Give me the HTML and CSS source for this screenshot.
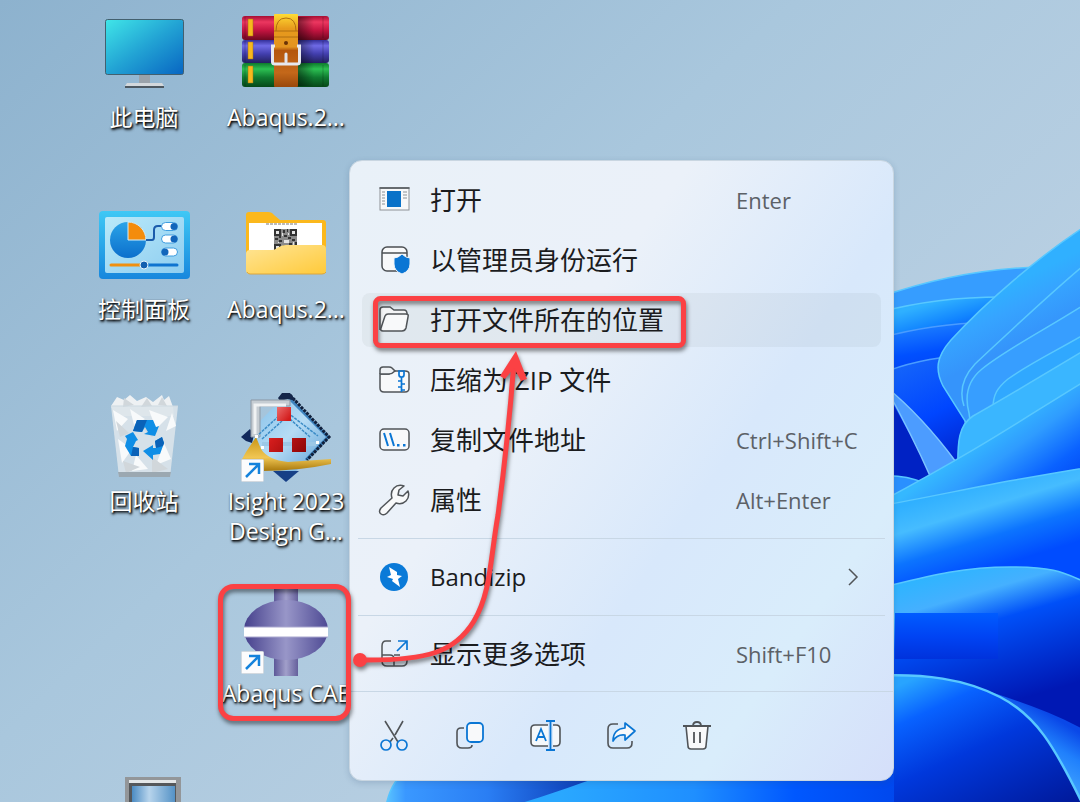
FILE: index.html
```html
<!DOCTYPE html>
<html lang="zh-CN">
<head>
  <meta charset="UTF-8">
  <title>桌面</title>
  <link rel="stylesheet" href="styles.css">
</head>
<body>

<!-- wallpaper -->
<svg class="wallpaper" viewBox="0 0 1080 802" preserveAspectRatio="xMinYMin slice" aria-hidden="true">
  <defs>
    <linearGradient id="sky" x1="0" y1="0" x2="1" y2="0.8">
      <stop offset="0" stop-color="#8db2ce"/>
      <stop offset="0.45" stop-color="#a9c7dd"/>
      <stop offset="1" stop-color="#c3d5e6"/>
    </linearGradient>
    <linearGradient id="p0" gradientUnits="userSpaceOnUse" x1="950" y1="298" x2="962" y2="340">
      <stop offset="0" stop-color="#2fb0ff"/>
      <stop offset="0.5" stop-color="#1184ff"/>
      <stop offset="1" stop-color="#004af8"/>
    </linearGradient>
    <linearGradient id="p1" gradientUnits="userSpaceOnUse" x1="930" y1="325" x2="940" y2="390">
      <stop offset="0" stop-color="#1a7cff"/>
      <stop offset="0.4" stop-color="#0050ff"/>
      <stop offset="1" stop-color="#0036ee"/>
    </linearGradient>
    <linearGradient id="p1b" gradientUnits="userSpaceOnUse" x1="900" y1="365" x2="950" y2="470">
      <stop offset="0" stop-color="#1464fa"/>
      <stop offset="0.5" stop-color="#0046ff"/>
      <stop offset="1" stop-color="#0020c8"/>
    </linearGradient>
    <linearGradient id="p2" gradientUnits="userSpaceOnUse" x1="1000" y1="290" x2="1025" y2="340">
      <stop offset="0" stop-color="#30b0ff"/>
      <stop offset="0.4" stop-color="#36a4ff"/>
      <stop offset="1" stop-color="#3594fb"/>
    </linearGradient>
    <linearGradient id="p3" gradientUnits="userSpaceOnUse" x1="965" y1="450" x2="1020" y2="525">
      <stop offset="0" stop-color="#35b8ff"/>
      <stop offset="0.3" stop-color="#2f9cff"/>
      <stop offset="0.7" stop-color="#0a62ff"/>
      <stop offset="1" stop-color="#0048f5"/>
    </linearGradient>
    <linearGradient id="p4" gradientUnits="userSpaceOnUse" x1="960" y1="488" x2="985" y2="570">
      <stop offset="0" stop-color="#30b0ff"/>
      <stop offset="0.3" stop-color="#46bcff"/>
      <stop offset="0.65" stop-color="#0c74ff"/>
      <stop offset="1" stop-color="#004cff"/>
    </linearGradient>
    <linearGradient id="p5" gradientUnits="userSpaceOnUse" x1="960" y1="568" x2="1000" y2="705">
      <stop offset="0" stop-color="#2fb4ff"/>
      <stop offset="0.2" stop-color="#45b0ff"/>
      <stop offset="0.42" stop-color="#0050f8"/>
      <stop offset="1" stop-color="#0018b4"/>
    </linearGradient>
    <linearGradient id="p6" gradientUnits="userSpaceOnUse" x1="915" y1="678" x2="990" y2="840">
      <stop offset="0" stop-color="#28a4ff"/>
      <stop offset="0.2" stop-color="#0862ff"/>
      <stop offset="0.5" stop-color="#0038dc"/>
      <stop offset="1" stop-color="#001a9c"/>
    </linearGradient>
    <linearGradient id="p7" gradientUnits="userSpaceOnUse" x1="385" y1="0" x2="590" y2="0">
      <stop offset="0" stop-color="#5cc6ff"/>
      <stop offset="0.1" stop-color="#3a98ff"/>
      <stop offset="0.5" stop-color="#2a7ef4"/>
      <stop offset="1" stop-color="#0a3ab4"/>
    </linearGradient>
    <linearGradient id="p8" gradientUnits="userSpaceOnUse" x1="560" y1="0" x2="895" y2="0">
      <stop offset="0" stop-color="#2aa8ff"/>
      <stop offset="0.4" stop-color="#1f8fff"/>
      <stop offset="0.7" stop-color="#0058ff"/>
      <stop offset="1" stop-color="#0048ee"/>
    </linearGradient>
    <linearGradient id="block" x1="0" y1="0" x2="0" y2="1">
      <stop offset="0" stop-color="#005cff"/>
      <stop offset="0.5" stop-color="#0044f4"/>
      <stop offset="1" stop-color="#0032dc"/>
    </linearGradient>
    <linearGradient id="blade" gradientUnits="userSpaceOnUse" x1="1036" y1="765" x2="1062" y2="722">
      <stop offset="0" stop-color="#3a9cff"/>
      <stop offset="0.5" stop-color="#2080fc"/>
      <stop offset="1" stop-color="#0a48e8"/>
    </linearGradient>
  </defs>
  <rect width="1080" height="802" fill="url(#sky)"/>
  <g stroke="#58c8ff" stroke-width="1.500">
    <path d="M880 297Q960 269 1040 267V480H880z" fill="#369dff"/>
    <path d="M880 312Q940 296 1010 297V480H880z" fill="url(#p0)"/>
    <path d="M880 338Q930 324 990 322V480H880z" fill="url(#p1)" stroke="#4a9cff"/>
    <path d="M880 374Q915 359 965 355V480H880z" fill="url(#p1b)" stroke="#4a9cff"/>
    <path d="M880 380L940 490H880z" fill="#0022c4" stroke="none"/>
    <path d="M885 386Q922 416 956 462L931 478Q912 435 885 386z" fill="#4c9cff" stroke="#7cc4ff"/>
    <path d="M880 476Q903 474 925 483L880 510z" fill="#2a90ff"/>
    <path d="M1090 223C1040 255 985 303 951 340C936 357 935 370 943 386L972 432L1090 420z" fill="url(#p2)"/>
    <path d="M1090 260C1050 293 1004 337 975 364C962 378 959 391 964 406" fill="none"/>
    <path d="M1090 301C1050 327 1008 348 982 369C966 382 965 398 969 413L972 435L1090 400z" fill="#379eff"/>
    <path d="M1090 331C1060 349 1030 363 1008 379C997 388 993 395 993 408L1090 400z" fill="#30a8ff"/>
    <path d="M1090 347C1050 371 1005 398 973 416C959 425 957 440 958 475L1090 430z" fill="#3ab6ff"/>
    <path d="M1090 378C1030 414 985 446 880 502V570H1090z" fill="url(#p3)"/>
    <path d="M880 506C930 497 980 486 1015 480S1060 472 1090 467V640H880z" fill="url(#p4)"/>
    <path d="M880 588C925 577 960 567 1010 567S1065 574 1090 584V812H880z" fill="url(#p5)"/>
    <path d="M895 613H998V659H895z" fill="url(#block)" stroke="none"/>
    <path d="M985 690C1020 702 1055 713 1090 733V812H1050z" fill="url(#blade)" stroke="none"/>
    <path d="M870 676C925 673 965 679 1000 697S1053 742 1088 815H870z" fill="url(#p6)" stroke="none"/>
    <path d="M870 676C925 673 965 679 1000 697S1053 742 1088 815" fill="none" stroke-width="2.500"/>
    <path d="M385 812C388 790 397 770 425 760H620V812z" fill="url(#p7)" stroke="#55c4ff"/>
    <path d="M500 809C550 796 590 778 640 765H894V812H500z" fill="url(#p8)" stroke="none"/>
  </g>
</svg>

<main class="desktop">
  <svg class="defs" aria-hidden="true">
    <symbol id="shortcut" viewBox="0 0 23 23">
      <rect x="0.5" y="0.5" width="22" height="22" rx="1" fill="#fcfcfd" stroke="#d3d9df"/>
      <path d="M5 18L18 5M8 5H18V15" fill="none" stroke="#1583dc" stroke-width="2.500"/>
    </symbol>
  </svg>

  <a class="icon" href="#">
    <svg viewBox="0 0 96 88" aria-hidden="true">
      <defs>
        <linearGradient id="screen" x1="0" y1="0" x2="1" y2="1">
          <stop offset="0" stop-color="#40e6e8"/>
          <stop offset="0.5" stop-color="#22a3d4"/>
          <stop offset="1" stop-color="#0865c2"/>
        </linearGradient>
      </defs>
      <path d="M43 68H54V77H43z" fill="#9aa2aa"/>
      <path d="M31 76H66L68 79H29z" fill="#d3d8dc"/>
      <path d="M29 79H68V81H29z" fill="#4d5861"/>
      <rect x="9.500" y="12.500" width="78" height="55" rx="2" fill="url(#screen)" stroke="#43606f"/>
    </svg>
    <span>此电脑</span>
  </a>

  <a class="icon" href="#">
    <svg viewBox="0 0 96 88" aria-hidden="true">
      <defs>
        <linearGradient id="red" x1="0" y1="0" x2="0" y2="1"><stop offset="0" stop-color="#a80f34"/><stop offset="0.25" stop-color="#ec3760"/><stop offset="0.6" stop-color="#c21440"/><stop offset="1" stop-color="#6d0820"/></linearGradient>
        <linearGradient id="blue" x1="0" y1="0" x2="0" y2="1"><stop offset="0" stop-color="#33309a"/><stop offset="0.25" stop-color="#6f6ae6"/><stop offset="0.6" stop-color="#423fae"/><stop offset="1" stop-color="#23205e"/></linearGradient>
        <linearGradient id="green" x1="0" y1="0" x2="0" y2="1"><stop offset="0" stop-color="#0d7a2c"/><stop offset="0.25" stop-color="#2cc052"/><stop offset="0.6" stop-color="#107a30"/><stop offset="1" stop-color="#064818"/></linearGradient>
        <linearGradient id="strap" x1="0" y1="0" x2="0" y2="1"><stop offset="0" stop-color="#ffdc34"/><stop offset="0.2" stop-color="#e79a1c"/><stop offset="0.45" stop-color="#e39420"/><stop offset="0.5" stop-color="#b4560c"/><stop offset="0.8" stop-color="#c4681a"/><stop offset="1" stop-color="#99480c"/></linearGradient>
        <linearGradient id="shade" x1="0" y1="0" x2="1" y2="0"><stop offset="0" stop-color="#000" stop-opacity="0.45"/><stop offset="1" stop-color="#000" stop-opacity="0"/></linearGradient>
      </defs>
      <rect x="4" y="9" width="87" height="24" rx="3" fill="url(#red)"/>
      <rect x="4" y="33" width="87" height="23" rx="3" fill="url(#blue)"/>
      <rect x="4" y="56" width="87" height="24" rx="3" fill="url(#green)"/>
      <path d="M7 10V31M7 34V55M7 58V79M85 10V31M85 34V55M85 58V79" stroke="#000" stroke-opacity="0.2"/>
      <path d="M10 12H15V29H10zM10 35H15V52H10zM10 59H15V76H10z" fill="#f6b81e" stroke="#9c7016" stroke-width="0.500"/>
      <path d="M60 10H76V79H60z" fill="url(#shade)"/>
      <rect x="36" y="7" width="24" height="73" rx="1" fill="url(#strap)"/>
      <path d="M38 24Q38 11 48 11T58 24M36 24H60M36 30H60" fill="none" stroke="#b06f10"/>
      <circle cx="48" cy="36" r="2" fill="#6a3206"/>
      <path d="M37 39H34.500V55Q34.500 57 37 57H59Q61.500 57 61.500 55V39H59" fill="none" stroke="#e6e8ee" stroke-width="3"/>
      <path d="M48 47V55" stroke="#e2e4ea" stroke-width="3" stroke-linecap="round"/>
    </svg>
    <span>Abaqus.2...</span>
  </a>

  <a class="icon" href="#">
    <svg viewBox="0 0 96 88" aria-hidden="true">
      <defs>
        <linearGradient id="panel" x1="0" y1="0" x2="0" y2="1"><stop offset="0" stop-color="#3fc8f5"/><stop offset="1" stop-color="#1787dd"/></linearGradient>
        <linearGradient id="inner" x1="0" y1="0" x2="1" y2="1"><stop offset="0" stop-color="#b9e9f9"/><stop offset="1" stop-color="#8ecdf0"/></linearGradient>
        <linearGradient id="pie" x1="0" y1="0" x2="0" y2="1"><stop offset="0" stop-color="#2aa4e8"/><stop offset="1" stop-color="#0c6fcc"/></linearGradient>
      </defs>
      <rect x="3" y="12" width="91" height="68" rx="4" fill="url(#panel)"/>
      <rect x="9" y="18" width="79" height="56" rx="2" fill="url(#inner)"/>
      <circle cx="32" cy="41" r="18" fill="url(#pie)"/>
      <path d="M32 41V23A18 18 0 0 1 50 41z" fill="#f48c0c" stroke="#d3eefa"/>
      <path d="M50 41H56Q58 41 58 38V31Q58 27 62 27H66" fill="none" stroke="#1a5cac" stroke-width="2"/>
      <g fill="#fff" stroke="#3f9ee0">
        <rect x="65.500" y="23.500" width="16" height="8" rx="4"/>
        <rect x="65.500" y="36" width="16" height="8" rx="4"/>
        <rect x="65.500" y="49" width="16" height="8" rx="4"/>
      </g>
      <g fill="#1266bb"><circle cx="78" cy="27.500" r="3.500"/><circle cx="78" cy="40" r="3.500"/><circle cx="69" cy="53" r="3.500"/></g>
      <path d="M15 66H46" stroke="#f0900f" stroke-width="3" stroke-linecap="round"/>
      <path d="M50 66H81" stroke="#0f74d0" stroke-width="3" stroke-linecap="round"/>
      <circle cx="48" cy="66" r="4" fill="#1460b0" stroke="#e6f5fc"/>
    </svg>
    <span>控制面板</span>
  </a>

  <a class="icon" href="#">
    <svg viewBox="0 0 96 88" aria-hidden="true">
      <defs>
        <linearGradient id="front" x1="0" y1="0" x2="1" y2="1"><stop offset="0" stop-color="#ffe596"/><stop offset="1" stop-color="#ffca3a"/></linearGradient>
      </defs>
      <path d="M8 16Q8 13 11 13H30Q34 13 36 16L42 21H85Q88 21 88 24V60H8z" fill="#fbb81c"/>
      <path d="M11 24H84V60H11z" fill="#fff"/>
      <path d="M28 25H59" stroke="#777" stroke-dasharray="3 1"/>
      <rect x="36" y="30" width="23" height="22" fill="#8b8b8b"/>
      <path d="M36 30H43V37H36zM52 30H59V37H52zM36 45H43V52H36zM45 31H47V34H45zM49 30H50V33H49zM46 36H49V38H46zM50 38H53V40H50zM37 39H40V41H37zM41 41H44V43H41zM54 40H57V42H54zM57 43H59V46H57zM51 44H54V46H51zM45 46H48V49H45zM49 48H52V51H49zM54 48H57V50H54zM41 37H43V39H41z" fill="#333"/>
      <path d="M38 32H41V35H38zM54 32H57V35H54zM38 47H41V50H38zM44 34H45V37H44zM50 34H51V36H50zM40 43H41V44H40zM55 43H56V46H55zM53 50H54V52H53zM46 41H51V44H46z" fill="#e4e4e4"/>
      <path d="M8 55Q8 51 12 51H34Q37 51 39 49L43 47Q45 46 48 46H84Q88 46 88 50V71Q88 75 84 75H12Q8 75 8 71z" fill="url(#front)"/>
      <path d="M9 73Q10 75 12 75H84Q87 75 88 73" fill="none" stroke="#dca63c"/>
    </svg>
    <span>Abaqus.2...</span>
  </a>

  <a class="icon" href="#">
    <svg viewBox="0 0 96 88" aria-hidden="true">
      <path d="M15 15L21 6L28 9L34 4L41 10L50 6L57 11L66 4L68 9L73 5L77 16L78 25H19z" fill="#eef1f3"/>
      <path d="M15 15H82L74 86H23z" fill="#dce4ea" opacity="0.900"/>
      <path d="M17 19L32 28L21 40zM34 18L49 28L38 34zM53 19L72 26L60 38zM76 22L80 35L70 40zM22 48L36 58L26 72zM40 64L52 78L36 80zM68 52L75 68L60 74z" fill="#f8fafb"/>
      <path d="M20 30L33 42L24 46zM44 34L62 40L56 46zM27 70L44 76L30 82zM56 66L72 78L56 82zM28 7L38 14L27 16zM51 7L56 15L45 16zM66 6L71 15L62 14z" fill="#d1d7db"/>
      <path d="M22 81H75L74 86H23z" fill="#9ba8b1"/>
      <path d="M15 15H82" stroke="#cdd9e1"/>
      <path d="M37 40L41 29H57L60 36L63 35L59 45L48 43L52 41L49 36L46 41z" fill="#0f8ee6"/>
      <path d="M37 40L41 29H51L46 41z" fill="#0a62b8"/>
      <path d="M29 45L37 41L42 49L40 50L37 56L43 57V65H35L29 55L31 48z" fill="#0f8ee6"/>
      <path d="M37 56L43 57V65H35z" fill="#0a62b8"/>
      <path d="M59 50L66 46L68 52L64 63L57 64V69L47 60L57 54V57H60z" fill="#0f8ee6"/>
      <path d="M59 50L66 46L68 52L67 55L60 57z" fill="#0a62b8"/>
    </svg>
    <span>回收站</span>
  </a>

  <a class="icon" href="#">
    <svg viewBox="0 0 96 88" aria-hidden="true">
      <defs>
        <linearGradient id="ice" x1="0" y1="0" x2="1" y2="1"><stop offset="0" stop-color="#79b9e6"/><stop offset="0.5" stop-color="#b6dcf5"/><stop offset="1" stop-color="#4a92cd"/></linearGradient>
        <linearGradient id="gold" x1="0" y1="0" x2="0" y2="1"><stop offset="0" stop-color="#c89414"/><stop offset="0.6" stop-color="#f0c653"/><stop offset="1" stop-color="#a8780c"/></linearGradient>
        <linearGradient id="cube" x1="0" y1="0" x2="1" y2="1"><stop offset="0" stop-color="#f48a8a"/><stop offset="0.4" stop-color="#d31c1c"/><stop offset="1" stop-color="#8c0606"/></linearGradient>
      </defs>
      <path d="M48 3L92 46L48 90L6 47z" fill="url(#ice)"/>
      <path d="M50 6L90 46L68 69" fill="none" stroke="#3f84bf" stroke-width="3"/>
      <path d="M52 4L91 46L69 69" fill="none" stroke="#10203c" stroke-width="3" stroke-dasharray="3 1"/>
      <path d="M40 7L44 2H52L58 10L50 8L42 10z" fill="#14264a"/>
      <path d="M3 46L12 38L16 44L14 52L8 50z" fill="#12295c"/>
      <path d="M35 80H61L48 91z" fill="#163f86"/>
      <path d="M13 9H52V15H22V46H13z" fill="#c6cdd3" stroke="#8b97a3"/>
      <path d="M17 43V14H48" fill="none" stroke="#f0f2f3" stroke-width="3"/>
      <path d="M18 46L44 22M24 48L44 30M50 22L80 45M52 28L72 46" fill="none" stroke="#3c8cc6" stroke-width="1.500" stroke-dasharray="3 1"/>
      <path d="M24 53H78" stroke="#9cc8e6" stroke-width="4"/>
      <path d="M3 70L8 61L18 46L23 58Q30 69 50 71L93 68V73Q60 80 24 80H3z" fill="url(#gold)"/>
      <path d="M39 16H53V30H39zM31 47H45V61H31zM54 47H68V61H54z" fill="url(#cube)"/>
      <path d="M17 44H20V47H17zM23 55H26V58H23zM78 50H81V53H78z" fill="#fff"/>
      <use href="#shortcut" x="3" y="68" width="23" height="23"/>
    </svg>
    <span>Isight 2023 Design G...</span>
  </a>

  <a class="icon second-column" href="#">
    <svg viewBox="0 0 96 88" aria-hidden="true">
      <defs>
        <linearGradient id="metal" x1="0" y1="0" x2="1" y2="0"><stop offset="0" stop-color="#45408c"/><stop offset="0.5" stop-color="#9896c8"/><stop offset="1" stop-color="#4e4a94"/></linearGradient>
        <linearGradient id="pipe" x1="0" y1="0" x2="1" y2="0"><stop offset="0" stop-color="#5d5898"/><stop offset="0.5" stop-color="#a19fca"/><stop offset="1" stop-color="#65609c"/></linearGradient>
      </defs>
      <path d="M36 6H60V93H36z" fill="url(#pipe)"/>
      <ellipse cx="48" cy="47" rx="42" ry="30" fill="url(#metal)"/>
      <path d="M6 44H90V54H6z" fill="#fff"/>
      <path d="M6 44H90M6 54H90" stroke="#a9a7cf"/>
      <use href="#shortcut" x="3" y="68" width="23" height="23"/>
    </svg>
    <span>Abaqus CAE</span>
  </a>

  <a class="icon first-column" href="#" aria-label="其他程序">
    <svg viewBox="0 0 96 88" aria-hidden="true">
      <defs>
        <linearGradient id="glass" x1="0" y1="0" x2="1" y2="0"><stop offset="0" stop-color="#4b8bc2"/><stop offset="0.4" stop-color="#b7d4ec"/><stop offset="1" stop-color="#5492c6"/></linearGradient>
      </defs>
      <path d="M29 2H85V88H29z" fill="#939699"/>
      <path d="M33 5H80V8H33z" fill="#e4e7e8"/>
      <path d="M33 8H80V88H33z" fill="#55585b"/>
      <path d="M36 11H79V88H36z" fill="url(#glass)"/>
    </svg>
  </a>
</main>

<!-- context menu -->
<nav class="menu">
  <div class="menu-list">
    <button class="item">
      <svg viewBox="0 0 32 32" aria-hidden="true">
        <rect x="2" y="4" width="29" height="22" fill="#f7f8f9" stroke="#8d9296"/>
        <path d="M1.500 4H31.500" stroke="#666b6f" stroke-width="2"/>
        <path d="M9 7H23V23H9z" fill="#0a72c8"/>
        <path d="M4 8H7M4 11H7M4 14H7M4 17H7M4 20H7M25 8H29M25 11H29M25 14H29" stroke="#8d9296"/>
      </svg>
      <span>打开</span><kbd>Enter</kbd>
    </button>
    <button class="item">
      <svg viewBox="0 0 32 32" aria-hidden="true">
        <rect x="4" y="3" width="25" height="24" rx="5" fill="#f8f9fa" stroke="#4b4f53" stroke-width="1.500"/>
        <path d="M4 9H29" stroke="#4b4f53" stroke-width="1.500"/>
        <path d="M24 10Q28 14 32 14V20Q32 27 24 30Q16 27 16 20V14Q20 14 24 10z" fill="#0a76d4" stroke="#ebf2f9"/>
      </svg>
      <span>以管理员身份运行</span>
    </button>
    <button class="item active">
      <svg viewBox="0 0 32 32" aria-hidden="true">
        <path d="M2 26V6Q2 3 5 3H12L16 6H26Q29 6 29 10" fill="#f3f4f5" stroke="#505458" stroke-width="1.500"/>
        <path d="M7 12Q8 10 10 10H28Q31 10 30 13L28 24Q27 27 24 27H5Q2 27 3 24z" fill="#f8f9fa" stroke="#505458" stroke-width="1.500"/>
      </svg>
      <span>打开文件所在的位置</span>
    </button>
    <button class="item">
      <svg viewBox="0 0 32 32" aria-hidden="true">
        <path d="M2 10V24Q2 28 6 28H27Q31 28 31 24V10Q31 7 27 7H15L11 10z" fill="#f8f9fa" stroke="#505458" stroke-width="1.500"/>
        <path d="M2 10V6Q2 3 5 3H11Q13 3 14 4L17 7Q14 10 11 10H2" fill="#eef1f4" stroke="#505458" stroke-width="1.500"/>
        <path d="M21 7H26V11Q26 13 23.500 13T21 11zM23.500 13V28M20 17H23M24 20H27M20 23H23M24 26H27" fill="none" stroke="#0a76d4" stroke-width="1.700"/>
      </svg>
      <span>压缩为 ZIP 文件</span>
    </button>
    <button class="item">
      <svg viewBox="0 0 32 32" aria-hidden="true">
        <rect x="2" y="5" width="29" height="21" rx="4" fill="#f8f9fa" stroke="#505458" stroke-width="1.500"/>
        <path d="M6 9L10 22M12 9L16 22" stroke="#0a76d4" stroke-width="2"/>
        <path d="M19 20H21.500V22.500H19zM25 20H27.500V22.500H25z" fill="#0a76d4"/>
      </svg>
      <span>复制文件地址</span><kbd>Ctrl+Shift+C</kbd>
    </button>
    <button class="item">
      <svg viewBox="0 0 32 32" aria-hidden="true">
        <path d="M26 2Q20 0 16 4T14 14L3 24Q0 28 3 30T9 29L18 19Q24 21 28 17T30 7L25 12L20 11L21 6z" fill="#f8f9fa" stroke="#505458" stroke-width="1.500" stroke-linejoin="round"/>
      </svg>
      <span>属性</span><kbd>Alt+Enter</kbd>
    </button>
  </div>
  <hr>
  <button class="item">
    <svg viewBox="0 0 32 32" aria-hidden="true">
      <circle cx="16" cy="16" r="14" fill="#0a7ad8"/>
      <path d="M11 6L19 11V14L24 15L20 18L22 26L14 20L15 18L9 16L13 14z" fill="#fff"/>
    </svg>
    <span class="latin">Bandizip</span>
    <svg class="chevron" viewBox="0 0 12 20" aria-hidden="true"><path d="M2 2L10 10L2 18" fill="none" stroke="#505458" stroke-width="1.500"/></svg>
  </button>
  <hr>
  <button class="item">
    <svg viewBox="0 0 32 32" aria-hidden="true">
      <path d="M13 3H8Q4 3 4 8V23Q4 28 9 28H24Q29 28 29 23V19M4 17H12Q16 17 16 21V28M16 17H22" fill="none" stroke="#505458" stroke-width="1.500"/>
      <path d="M19 13L29 3M20 3H29V12" fill="none" stroke="#0a76d4" stroke-width="1.700"/>
    </svg>
    <span>显示更多选项</span><kbd>Shift+F10</kbd>
  </button>
  <div class="actions">
    <button aria-label="剪切">
      <svg viewBox="0 0 32 32" aria-hidden="true">
        <path d="M7 1L20 22M25 1L17 15M15 18L12 22" fill="none" stroke="#505458" stroke-width="1.600"/>
        <circle cx="8" cy="25" r="5" fill="none" stroke="#0a76d4" stroke-width="1.700"/>
        <circle cx="24" cy="25" r="5" fill="none" stroke="#0a76d4" stroke-width="1.700"/>
      </svg>
    </button>
    <button aria-label="复制">
      <svg viewBox="0 0 32 32" aria-hidden="true">
        <path d="M10 8H7Q3 8 3 12V23Q3 28 8 28H14Q18 28 18 25" fill="none" stroke="#505458" stroke-width="1.600"/>
        <rect x="13" y="3" width="16" height="19" rx="4" fill="#f8f9fa" stroke="#0a76d4" stroke-width="1.800"/>
      </svg>
    </button>
    <button aria-label="重命名">
      <svg viewBox="0 0 32 32" aria-hidden="true">
        <path d="M18 5H5Q1 5 1 9V22Q1 26 5 26H18M23 5H26Q30 5 30 9V22Q30 26 26 26H23" fill="#f4f8fb" stroke="#505458" stroke-width="1.600"/>
        <path d="M6 21L11 9L16 21M8 17H14M16 1H25M16 30H25M20.500 1V30" fill="none" stroke="#0a76d4" stroke-width="1.800"/>
      </svg>
    </button>
    <button aria-label="共享">
      <svg viewBox="0 0 32 32" aria-hidden="true">
        <path d="M12 4H7Q2 4 2 9V23Q2 28 7 28H21Q26 28 26 23V21" fill="none" stroke="#505458" stroke-width="1.600"/>
        <path d="M19 3L29 11L19 20V15Q11 14 7 21Q7 9 19 8z" fill="#f8f9fa" stroke="#0a76d4" stroke-width="1.700" stroke-linejoin="round"/>
      </svg>
    </button>
    <button aria-label="删除">
      <svg viewBox="0 0 32 32" aria-hidden="true">
        <path d="M4 6L6 26Q6 29 9 29H21Q24 29 24 26L26 6z" fill="#f8f9fa" stroke="#505458" stroke-width="1.600"/>
        <path d="M1 6H29M11 6Q11 2 15 2T19 6M12 12V23M18 12V23" fill="none" stroke="#505458" stroke-width="1.800"/>
      </svg>
    </button>
  </div>
</nav>

<!-- red markers pointing at the menu entry -->
<svg class="marks" width="1080" height="802" viewBox="0 0 1080 802" aria-hidden="true">
  <g fill="none" stroke="#fb4144" stroke-width="5">
    <rect x="220.500" y="586.500" width="128" height="132" rx="13"/>
    <rect x="375.500" y="298.500" width="308" height="47" rx="5"/>
    <path d="M360 660C428 661 455 652 474 621C491 592 490 560 498 515Q508 440 514 362"/>
  </g>
  <circle cx="360" cy="660" r="7" fill="#fb4144"/>
  <path d="M516 351L527 379L521 381L514 368L505 379L500 376z" fill="#fb4144"/>
</svg>

</body>
</html>
```
FILE: styles.css
```css
body {
  margin: 0;
  min-height: 100vh;
  overflow: hidden;
  position: relative;
  background: #a9c6dd;
  font-family: "Open Sans", "Noto Sans CJK SC", sans-serif;
}
.wallpaper {
  position: absolute;
  top: 0;
  left: 0;
  width: 100%;
  height: 100%;
}
.defs {
  position: absolute;
  width: 0;
  height: 0;
}
.desktop {
  position: relative;
  height: 100vh;
  box-sizing: border-box;
  display: grid;
  grid-template-columns: 142px 142px;
  grid-auto-rows: 192px;
  padding: 7px 0 0 73px;
  overflow: hidden;
}
.icon {
  display: flex;
  flex-direction: column;
  align-items: center;
  gap: 7px;
  color: #fff;
  font-size: 23px;
  line-height: 30px;
  text-align: center;
  text-decoration: none;
  text-shadow: 1px 1px 2px #000, 1px 2px 3px rgba(0, 0, 0, 0.8);
}
.icon svg {
  flex: none;
  width: 96px;
  height: 88px;
  overflow: visible;
}
.first-column {
  grid-column: 1;
}
.second-column {
  grid-column: 2;
}

/* context menu */
.menu {
  position: absolute;
  top: 160px;
  left: 349px;
  width: 545px;
  box-sizing: border-box;
  padding: 12px 12px 0;
  border: 1px solid #c9d6e1;
  border-radius: 13px;
  overflow: hidden;
  background: linear-gradient(125deg, #e9f1f8 0%, #ebf1f9 35%, #d8e8fb 60%, #d9edfb 80%, #d5dffa 100%);
  box-shadow: 0 2px 6px rgba(40, 70, 110, 0.2);
}
.menu-list {
  display: grid;
  gap: 6px;
}
.menu button {
  border: none;
  background: none;
  font-family: inherit;
  cursor: pointer;
}
.item {
  display: grid;
  grid-template-columns: 32px 1fr 145px;
  column-gap: 20px;
  align-items: center;
  width: 100%;
  height: 54px;
  padding: 0 0 0 16px;
  border-radius: 8px;
  color: #1b1c1e;
  font-size: 26px;
  line-height: 32px;
  text-align: left;
  white-space: nowrap;
}
.menu .active,
.menu .item:hover {
  background: rgba(100, 110, 115, 0.07);
}
.item svg {
  width: 32px;
  height: 32px;
}
.item .chevron {
  width: 12px;
  height: 20px;
  justify-self: end;
  margin-right: 22px;
}
.item kbd {
  color: #5c6167;
  font-family: inherit;
  font-size: 22px;
}
.item .latin {
  font-size: 24px;
}
.menu hr {
  height: 1px;
  margin: 11px -4px;
  border: none;
  background: #c8d7e5;
}
.actions {
  display: flex;
  gap: 12px;
  margin: 10px -12px 0;
  padding: 12px;
  border-top: 1px solid #c8d7e5;
}
.actions button {
  width: 64px;
  height: 64px;
  padding: 0;
}
.actions svg {
  display: block;
  width: 32px;
  height: 32px;
  margin: 0 auto;
}

.marks {
  position: absolute;
  top: 0;
  left: 0;
  pointer-events: none;
  filter: drop-shadow(1px 3px 2px rgba(0, 0, 0, 0.5));
}
```
